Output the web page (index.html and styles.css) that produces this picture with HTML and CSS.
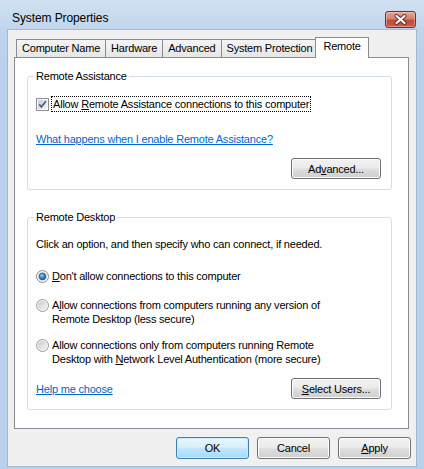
FILE: index.html
```html
<!DOCTYPE html>
<html>
<head>
<meta charset="utf-8">
<link rel="stylesheet" href="styles.css">
</head>
<body>
<div class="window">
  <div class="titlebar">
    <span class="title">System Properties</span>
    <button class="close" aria-label="Close">
      <svg width="13" height="11" viewBox="0 0 13 11">
        <path d="M2.5 2 L10.5 9 M10.5 2 L2.5 9" stroke="#6b2a25" stroke-width="4" stroke-linecap="round"/>
        <path d="M2.5 2 L10.5 9 M10.5 2 L2.5 9" stroke="#ffffff" stroke-width="2.2" stroke-linecap="round"/>
      </svg>
    </button>
  </div>
  <div class="client">
    <div class="tabs">
      <div class="tab">Computer Name</div>
      <div class="tab">Hardware</div>
      <div class="tab">Advanced</div>
      <div class="tab">System Protection</div>
      <div class="tab active">Remote</div>
    </div>
    <div class="panel">
      <fieldset class="group assist">
        <legend>Remote Assistance</legend>
        <label class="check-row">
          <svg class="checkbox" width="13" height="13" viewBox="0 0 13 13">
            <defs>
              <linearGradient id="cbg" x1="0" y1="0" x2="1" y2="1">
                <stop offset="0" stop-color="#c9ccd1"/>
                <stop offset="1" stop-color="#f4f4f5"/>
              </linearGradient>
            </defs>
            <rect x="0.5" y="0.5" width="12" height="12" fill="#f6f6f6" stroke="#8e8f8f"/>
            <rect x="2" y="2" width="9" height="9" fill="url(#cbg)"/>
            <path d="M3.2 6.4 L5.4 8.9 L9.9 3.3" fill="none" stroke="#4a5f8a" stroke-width="1.7"/>
          </svg>
          <span class="focus">Allow <u>R</u>emote Assistance connections to this computer</span>
        </label>
        <a class="link assist-link" href="#">What happens when I enable Remote Assistance?</a>
        <div class="row-end">
          <button class="btn wide">Ad<u>v</u>anced...</button>
        </div>
      </fieldset>

      <fieldset class="group desktop">
        <legend>Remote Desktop</legend>
        <p class="intro">Click an option, and then specify who can connect, if needed.</p>
        <label class="radio first">
          <svg class="radio-dot" width="13" height="13" viewBox="0 0 13 13">
            <defs>
              <linearGradient id="rbg" x1="0" y1="0" x2="1" y2="1">
                <stop offset="0" stop-color="#c7cbd0"/>
                <stop offset="1" stop-color="#f6f6f6"/>
              </linearGradient>
              <radialGradient id="rsel" cx="0.4" cy="0.35" r="0.7">
                <stop offset="0" stop-color="#8fd0f7"/>
                <stop offset="0.6" stop-color="#2a7fc9"/>
                <stop offset="1" stop-color="#15508f"/>
              </radialGradient>
            </defs>
            <circle cx="6.5" cy="6.5" r="6" fill="#f4f4f4" stroke="#8e8f8f"/>
            <circle cx="6.5" cy="6.5" r="4.6" fill="url(#rbg)"/>
            <circle cx="6.5" cy="6.5" r="3.4" fill="url(#rsel)" stroke="#1c5180" stroke-width="0.6"/>
          </svg>
          <span><u>D</u>on't allow connections to this computer</span>
        </label>
        <label class="radio second">
          <svg class="radio-dot" width="13" height="13" viewBox="0 0 13 13">
            <circle cx="6.5" cy="6.5" r="6" fill="#f4f4f4" stroke="#9a9b9b"/>
            <circle cx="6.5" cy="6.5" r="4.6" fill="url(#rbg)"/>
          </svg>
          <span>A<u>l</u>low connections from computers running any version of<br>Remote Desktop (less secure)</span>
        </label>
        <label class="radio third">
          <svg class="radio-dot" width="13" height="13" viewBox="0 0 13 13">
            <circle cx="6.5" cy="6.5" r="6" fill="#f4f4f4" stroke="#9a9b9b"/>
            <circle cx="6.5" cy="6.5" r="4.6" fill="url(#rbg)"/>
          </svg>
          <span>Allow connections only from computers running Remote<br>Desktop with <u>N</u>etwork Level Authentication (more secure)</span>
        </label>
        <div class="row-split">
          <a class="link" href="#">Help me choose</a>
          <button class="btn wide"><u>S</u>elect Users...</button>
        </div>
      </fieldset>
    </div>
    <div class="actions">
      <button class="btn action default">OK</button>
      <button class="btn action">Cancel</button>
      <button class="btn action"><u>A</u>pply</button>
    </div>
  </div>
</div>
</body>
</html>
```

FILE: styles.css
```css
html, body {
  margin: 0;
  padding: 0;
}

body {
  font-family: "Liberation Sans", Arial, sans-serif;
  font-size: 11px;
  letter-spacing: -0.2px;
  color: #000;
  background: #b9d1ea;
}

.window {
  width: 424px;
  height: 469px;
  box-sizing: border-box;
  display: flex;
  flex-direction: column;
  background: linear-gradient(#d1e1f2 0px, #c0d5ec 30px, #b9d1ea 60px, #b9d1ea 100%);
  overflow: hidden;
}

.titlebar {
  height: 29px;
  flex: none;
  display: flex;
  justify-content: space-between;
  align-items: flex-start;
  padding: 0 8px 0 12px;
  box-sizing: border-box;
}

.title {
  font-size: 12px;
  letter-spacing: -0.1px;
  line-height: 14px;
  margin-top: 11px;
}

.close {
  margin-top: 11px;
  width: 31px;
  height: 17px;
  padding: 0;
  border: 1px solid #6e2f2a;
  border-radius: 3px;
  background: linear-gradient(#e8a495 0%, #d7806f 45%, #c5493a 55%, #c95a45 100%);
  box-shadow: inset 0 0 0 1px rgba(255, 220, 210, 0.45);
  display: flex;
  align-items: center;
  justify-content: center;
}

.client {
  margin-left: 7px;
  width: 410px;
  height: 438px;
  flex: none;
  box-sizing: border-box;
  border: 1px solid #a3b9d1;
  background: #f0f0f0;
  padding: 7px 5px 0 6px;
  display: flex;
  flex-direction: column;
}

.tabs {
  display: flex;
  align-items: flex-end;
  height: 20px;
  padding-left: 2px;
  position: relative;
  z-index: 1;
  flex: none;
}

.tab {
  height: 18px;
  line-height: 17px;
  padding: 0 5px;
  box-sizing: border-box;
  border: 1px solid #898c95;
  border-bottom: none;
  background: linear-gradient(#f4f4f4, #e6e6e6);
  margin-right: -1px;
  white-space: nowrap;
}

.tab.active {
  position: relative;
  height: 21px;
  line-height: 16px;
  margin: 0 0 -1px -2px;
  padding: 0 7px;
  background: #ffffff;
}

.panel {
  margin-right: 2px;
  height: 372px;
  box-sizing: border-box;
  border: 1px solid #898c95;
  background: #ffffff;
  padding: 11px 16px 0 12px;
  flex: none;
}

.group {
  margin: 0;
  min-width: 0;
  border: 1px solid #d5dce3;
  border-radius: 3px;
  padding: 0 10px 10px 8px;
}

.group legend {
  padding: 0 2px;
  margin-left: -2px;
  line-height: 14px;
}

.group.desktop {
  margin-top: 20px;
}

.check-row {
  display: flex;
  align-items: center;
  margin-top: 13px;
  height: 16px;
}

.checkbox {
  flex: none;
  margin-right: 2px;
}

.focus {
  border: 1px dotted #000;
  padding: 0 1px;
  line-height: 14px;
}

.link {
  display: block;
  color: #0066cc;
  text-decoration: underline;
  line-height: 14px;
}

.assist-link {
  margin-top: 20px;
}

.row-end {
  display: flex;
  justify-content: flex-end;
  margin-top: 12px;
}

.btn {
  font: inherit;
  letter-spacing: inherit;
  color: #000;
  height: 21px;
  padding: 0;
  box-sizing: border-box;
  border: 1px solid #707070;
  border-radius: 3px;
  background: linear-gradient(#f2f2f2 0%, #ebebeb 45%, #dddddd 55%, #cfcfcf 100%);
  box-shadow: inset 0 0 0 1px #fcfcfc;
}

.btn.wide {
  width: 90px;
}

.intro {
  margin: 13px 0 0;
  line-height: 14px;
}

.radio {
  display: flex;
  align-items: flex-start;
  line-height: 14px;
}

.radio-dot {
  flex: none;
  margin: 1px 3px 0 0;
}

.radio.first {
  margin-top: 18px;
}

.radio.second {
  margin-top: 15px;
}

.radio.third {
  margin-top: 12px;
}

.row-split {
  display: flex;
  justify-content: space-between;
  align-items: center;
  margin-top: 12px;
}

.actions {
  display: flex;
  justify-content: flex-end;
  gap: 8px;
  margin-top: 8px;
}

.btn.action {
  width: 73px;
  height: 22px;
}

.btn.default {
  border-color: #3c7fb1;
  background: linear-gradient(#eaf6fd 0%, #d9f0fc 45%, #bee6fd 55%, #a7d9f5 100%);
  box-shadow: inset 0 0 0 1px #c7ecfc;
}
```
